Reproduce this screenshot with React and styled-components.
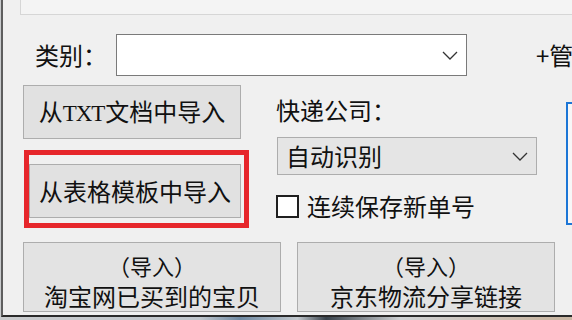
import React from 'react';
import styled, { createGlobalStyle } from 'styled-components';

const GlobalStyle = createGlobalStyle`
    html, body {
        margin: 0;
        padding: 0;
        background: #f0f0f0;
    }
    body {
        font-family: "Noto Sans CJK SC", "Noto Sans", sans-serif;
        color: #111;
    }
`;

const Screen = styled.div`
    width: 572px;
    height: 320px;
    overflow: hidden;
    background: linear-gradient(90deg, #c9cbcd 0%, #bfc6cc 35%, #6f8aa3 42%, #c3c9ce 52%, #39434c 57%, #cfd2d4 70%, #c9b7a4 95%);
`;

const Window = styled.div`
    box-sizing: border-box;
    height: 317px;
    margin-left: 1px;
    background: #f0f0f0;
    border-left: 2px solid #5e5e5e;
    border-bottom: 2px solid #2a2a2a;
    overflow: hidden;
    display: flex;
    flex-direction: column;
`;

const TopPanel = styled.div`
    height: 14px;
    margin-left: 17px;
    background: #f4f4f4;
    border-left: 1px solid #d6d6d6;
    border-bottom: 1px solid #d6d6d6;
    flex-shrink: 0;
`;

const Row = styled.div`
    display: flex;
    align-items: ${p => p.$align || 'center'};
    height: ${p => p.$height}px;
    margin-top: ${p => p.$top}px;
    padding-left: ${p => p.$left}px;
    gap: ${p => p.$gap || 0}px;
    flex-shrink: 0;
    white-space: nowrap;
`;

const Label = styled.span`
    font-size: 24px;
    line-height: 26px;
    height: 26px;
    width: ${p => (p.$width ? `${p.$width}px` : 'auto')};
    margin-top: ${p => p.$top || 0}px;
    flex-shrink: 0;
`;

const Combo = styled.div`
    display: flex;
    align-items: center;
    justify-content: space-between;
    box-sizing: border-box;
    width: ${p => p.$width}px;
    height: ${p => p.$height}px;
    margin-top: ${p => p.$top || 0}px;
    margin-left: ${p => p.$left || 0}px;
    padding: 0 8px 0 8px;
    background: ${p => (p.$editable ? '#ffffff' : '#e5e5e5')};
    border: 1px solid ${p => (p.$editable ? '#7a7a7a' : '#adadad')};
    font-size: 24px;
    line-height: 30px;
    flex-shrink: 0;
`;

const ManageLink = styled.span`
    margin-left: 69px;
    font-size: 24px;
    line-height: 26px;
`;

const Columns = styled.div`
    display: flex;
    align-items: flex-start;
    height: 143px;
    margin-top: 9px;
    padding-left: 20px;
    flex-shrink: 0;
`;

const LeftCol = styled.div`
    display: flex;
    flex-direction: column;
    width: 253px;
    flex-shrink: 0;
`;

const RightCol = styled.div`
    display: flex;
    flex-direction: column;
    width: 290px;
    flex-shrink: 0;
`;

const Button = styled.div`
    box-sizing: border-box;
    width: ${p => p.$width}px;
    height: ${p => p.$height}px;
    background: ${p => (p.$stack ? '#e3e3e3' : '#e1e1e1')};
    border: 1px solid #adadad;
    display: flex;
    flex-direction: column;
    align-items: center;
    justify-content: ${p => (p.$stack ? 'flex-start' : 'center')};
    padding-top: ${p => (p.$stack ? 10 : 0)}px;
    font-size: 24px;
    line-height: 28px;
    flex-shrink: 0;
    overflow: hidden;
`;

const Latin = styled.span`
    font-family: "Liberation Serif", "Noto Sans CJK SC", serif;
    font-size: 23px;
    letter-spacing: -1px;
    margin-right: 1px;
`;

const Highlight = styled.div`
    box-sizing: border-box;
    width: 225px;
    margin-top: 11px;
    margin-left: 1px;
    padding: 9px 3px 5px 0;
    border: 5px solid #e6262b;
    display: flex;
    justify-content: flex-end;
`;

const CheckRow = styled.label`
    display: flex;
    align-items: center;
    gap: 8px;
    margin-top: 19px;
    height: 24px;
    font-size: 24px;
    line-height: 24px;
`;

const Box = styled.span`
    box-sizing: border-box;
    width: 23px;
    height: 23px;
    background: #ffffff;
    border: 2px solid #1f1f1f;
    flex-shrink: 0;
`;

const FocusFrame = styled.div`
    width: 40px;
    height: 123px;
    margin-top: 17px;
    box-sizing: border-box;
    border: 2px solid #1c76d6;
    background: #f7f7f7;
    flex-shrink: 0;
`;

const SmallLine = styled.span`
    display: block;
    font-size: 22px;
    line-height: 24px;
    height: 24px;
`;

const BigLine = styled.span`
    display: block;
    font-size: 24px;
    line-height: 30px;
    height: 30px;
    margin-top: 4px;
`;

function Chevron() {
    return (
        <svg width="16" height="9" viewBox="0 0 16 9">
            <polyline points="1,1 8,8 15,1" fill="none" stroke="#333" strokeWidth="1.3" />
        </svg>
    );
}

export default function App() {
    return (
        <>
            <GlobalStyle />
            <Screen>
                <Window>
                    <TopPanel />
                    <Row $top={19} $left={32} $height={42}>
                        <Label $width={81}>类别：</Label>
                        <Combo $width={351} $height={42} $editable>
                            <span />
                            <Chevron />
                        </Combo>
                        <ManageLink>+管理</ManageLink>
                    </Row>
                    <Columns>
                        <LeftCol>
                            <Button $width={218} $height={54}>
                                <span>从<Latin>TXT</Latin>文档中导入</span>
                            </Button>
                            <Highlight>
                                <Button $width={212} $height={54}>从表格模板中导入</Button>
                            </Highlight>
                        </LeftCol>
                        <RightCol>
                            <Label $top={12}>快递公司：</Label>
                            <Combo $width={260} $height={38} $top={14} $left={1}>
                                <span>自动识别</span>
                                <Chevron />
                            </Combo>
                            <CheckRow>
                                <Box />
                                连续保存新单号
                            </CheckRow>
                        </RightCol>
                        <FocusFrame />
                    </Columns>
                    <Row $top={14} $left={20} $gap={16} $height={70} $align="flex-start">
                        <Button $width={258} $height={70} $stack>
                            <SmallLine>（导入）</SmallLine>
                            <BigLine>淘宝网已买到的宝贝</BigLine>
                        </Button>
                        <Button $width={258} $height={70} $stack>
                            <SmallLine>（导入）</SmallLine>
                            <BigLine>京东物流分享链接</BigLine>
                        </Button>
                    </Row>
                </Window>
            </Screen>
        </>
    );
}
